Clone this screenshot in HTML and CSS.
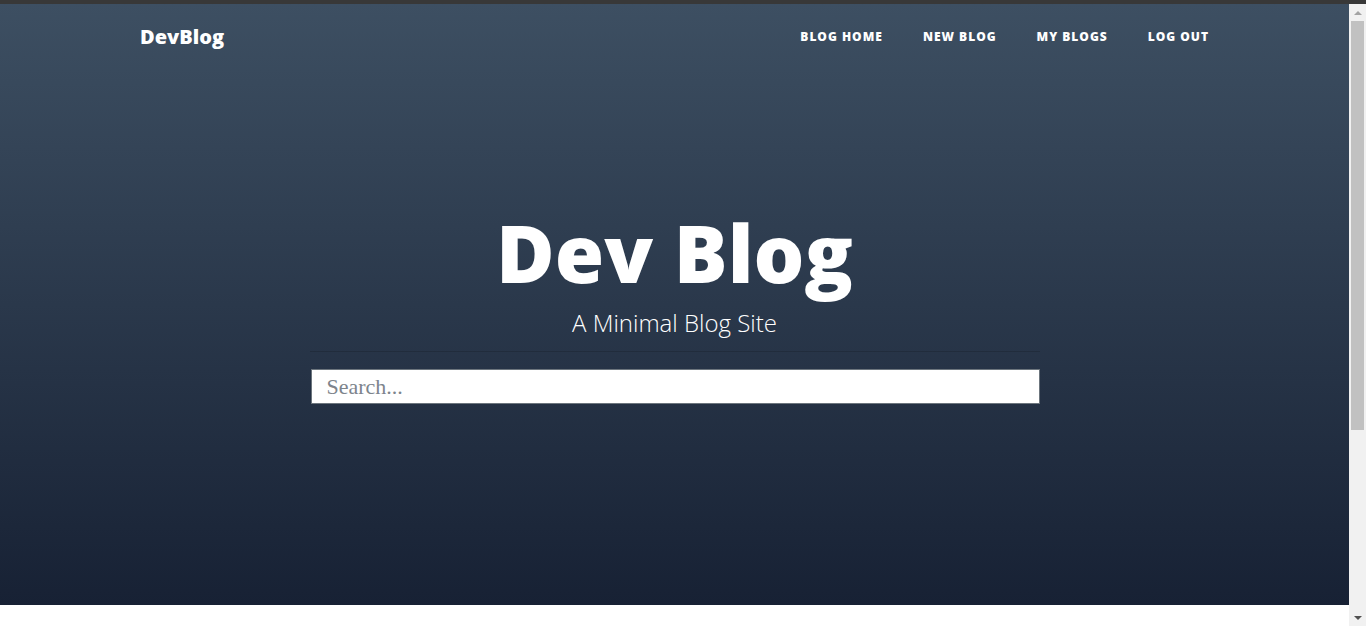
FILE: index.html
```html
<!DOCTYPE html>
<html lang="en">
<head>
<meta charset="utf-8">
<title>DevBlog</title>
<link rel="stylesheet" href="styles.css">
</head>
<body>
<div class="topbar"></div>
<div class="window">
  <div class="viewport">
    <header class="hero">
      <nav class="navbar">
        <a class="brand" href="#">DevBlog</a>
        <ul class="nav-links">
          <li><a href="#">Blog Home</a></li>
          <li><a href="#">New Blog</a></li>
          <li><a href="#">My Blogs</a></li>
          <li><a href="#">Log Out</a></li>
        </ul>
      </nav>
      <div class="hero-content">
        <h1 class="title">Dev Blog</h1>
        <p class="subtitle">A Minimal Blog Site</p>
        <div class="search-wrap">
          <hr class="divider">
          <input class="search" type="text" placeholder="Search...">
        </div>
      </div>
    </header>
    <main class="content"></main>
  </div>
  <div class="scrollbar" aria-hidden="true">
    <div class="sb-btn"><span class="arrow-up"></span></div>
    <div class="sb-track"><div class="sb-thumb"></div></div>
    <div class="sb-btn"><span class="arrow-down"></span></div>
  </div>
</div>
</body>
</html>
```
FILE: styles.css
```css
html, body {
  margin: 0;
  padding: 0;
}
body {
  font-family: "Open Sans", "Liberation Sans", sans-serif;
  background: #fff;
  color: #212529;
  height: 626px;
  overflow: hidden;
}
.topbar {
  height: 4px;
  background: #383838;
}
.window {
  display: flex;
  height: 622px;
}
.viewport {
  flex: 1;
  overflow: hidden;
}
.hero {
  height: 601px;
  background: linear-gradient(to bottom, #3d4f62 0%, #172134 100%);
  color: #fff;
  display: flex;
  flex-direction: column;
}
.navbar {
  height: 64px;
  padding: 0 140px;
  display: flex;
  align-items: center;
  justify-content: space-between;
}
.brand {
  color: #fff;
  text-decoration: none;
  font-size: 20px;
  font-weight: 800;
}
.nav-links {
  list-style: none;
  margin: 0 -20px 0 0;
  padding: 0;
  display: flex;
}
.nav-links a {
  display: block;
  padding: 0 20px;
  color: #fff;
  text-decoration: none;
  text-transform: uppercase;
  font-size: 12px;
  font-weight: 800;
  letter-spacing: 1px;
}
.hero-content {
  margin-top: 140px;
  display: flex;
  flex-direction: column;
  align-items: center;
  text-align: center;
}
.title {
  margin: 0;
  font-size: 80px;
  line-height: 88px;
  font-weight: 800;
}
.subtitle {
  margin: 14px 0 0;
  font-size: 24px;
  line-height: 26px;
  font-weight: 300;
}
.search-wrap {
  width: 730px;
  margin-top: 15px;
}
.divider {
  margin: 0 0 17px;
  border: 0;
  border-top: 1px solid rgba(0, 0, 0, 0.15);
}
.search {
  display: block;
  box-sizing: border-box;
  width: 729px;
  height: 35px;
  margin-left: 1px;
  padding: 0 15px;
  border: 1px solid #6c757d;
  border-radius: 0;
  background: #fff;
  font-family: "Liberation Serif", "DejaVu Serif", serif;
  font-size: 22px;
  color: #495057;
  outline: none;
}
.search::placeholder {
  color: #7d848c;
}
.content {
  height: 300px;
}
.scrollbar {
  width: 17px;
  background: #f1f1f1;
  display: flex;
  flex-direction: column;
}
.sb-btn {
  height: 17px;
  display: flex;
  align-items: center;
  justify-content: center;
}
.arrow-up {
  width: 0;
  height: 0;
  border-left: 4px solid transparent;
  border-right: 4px solid transparent;
  border-bottom: 4px solid #a3a3a3;
}
.arrow-down {
  width: 0;
  height: 0;
  border-left: 4px solid transparent;
  border-right: 4px solid transparent;
  border-top: 4px solid #505050;
}
.sb-track {
  flex: 1;
  padding: 0 2px;
}
.sb-thumb {
  height: 409px;
  background: #c1c1c1;
}
```
